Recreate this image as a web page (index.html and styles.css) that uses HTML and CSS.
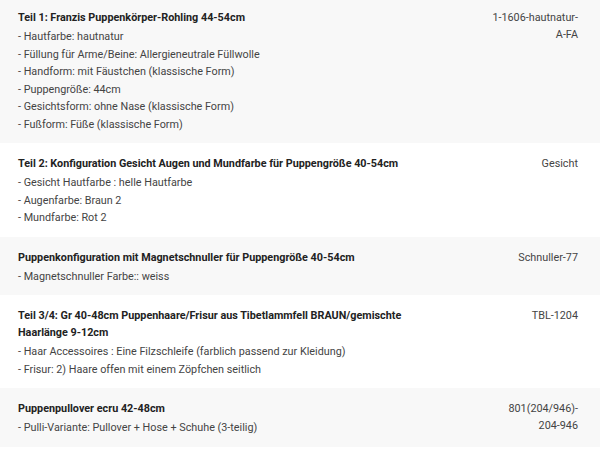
FILE: index.html
```html
<!DOCTYPE html>
<html lang="de">
<head>
<meta charset="utf-8">
<link rel="stylesheet" href="styles.css">
</head>
<body>
<div class="items">
  <div class="item">
    <div class="info">
      <div class="title">Teil 1: Franzis Puppenkörper-Rohling 44-54cm</div>
      <div class="opt">- Hautfarbe: hautnatur</div>
      <div class="opt">- Füllung für Arme/Beine: Allergieneutrale Füllwolle</div>
      <div class="opt">- Handform: mit Fäustchen (klassische Form)</div>
      <div class="opt">- Puppengröße: 44cm</div>
      <div class="opt">- Gesichtsform: ohne Nase (klassische Form)</div>
      <div class="opt">- Fußform: Füße (klassische Form)</div>
    </div>
    <div class="sku">1-1606-hautnatur-<br>A-FA</div>
  </div>
  <div class="item">
    <div class="info">
      <div class="title">Teil 2: Konfiguration Gesicht Augen und Mundfarbe für Puppengröße 40-54cm</div>
      <div class="opt">- Gesicht Hautfarbe : helle Hautfarbe</div>
      <div class="opt">- Augenfarbe: Braun 2</div>
      <div class="opt">- Mundfarbe: Rot 2</div>
    </div>
    <div class="sku">Gesicht</div>
  </div>
  <div class="item">
    <div class="info">
      <div class="title">Puppenkonfiguration mit Magnetschnuller für Puppengröße 40-54cm</div>
      <div class="opt">- Magnetschnuller Farbe:: weiss</div>
    </div>
    <div class="sku">Schnuller-77</div>
  </div>
  <div class="item">
    <div class="info">
      <div class="title">Teil 3/4: Gr 40-48cm Puppenhaare/Frisur aus Tibetlammfell BRAUN/gemischte Haarlänge 9-12cm</div>
      <div class="opt">- Haar Accessoires : Eine Filzschleife (farblich passend zur Kleidung)</div>
      <div class="opt">- Frisur: 2) Haare offen mit einem Zöpfchen seitlich</div>
    </div>
    <div class="sku">TBL-1204</div>
  </div>
  <div class="item">
    <div class="info">
      <div class="title">Puppenpullover ecru 42-48cm</div>
      <div class="opt">- Pulli-Variante: Pullover + Hose + Schuhe (3-teilig)</div>
    </div>
    <div class="sku">801(204/946)-<br>204-946</div>
  </div>
</div>
</body>
</html>
```

FILE: styles.css
```css
html, body {
  margin: 0;
  padding: 0;
  background: #fff;
}
body {
  font-family: Roboto, "Liberation Sans", sans-serif;
  font-size: 10.8px;
  color: #444;
}
.items {
  margin-top: -3px;
}
.item {
  display: flex;
  gap: 40px;
  padding: 12px 22px 10px 18px;
}
.item:nth-child(odd) {
  background: #f8f8f8;
}
.info {
  flex: 1;
  min-width: 0;
}
.title {
  font-weight: 700;
  color: #222;
  line-height: 17px;
  margin-bottom: 2px;
}
.opt {
  line-height: 17.5px;
}
.sku {
  width: 87px;
  flex: none;
  text-align: right;
  line-height: 17px;
  color: #444;
}
```
